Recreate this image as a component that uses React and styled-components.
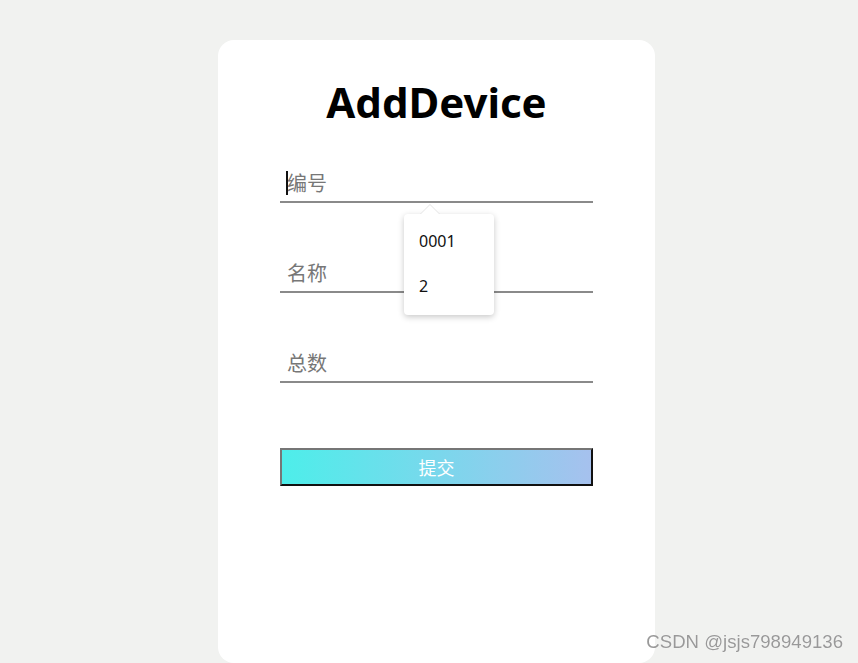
import React from 'react';
import styled, { createGlobalStyle } from 'styled-components';

const GlobalStyle = createGlobalStyle`
  html, body {
    margin: 0;
    padding: 0;
    background: #f1f2f0;
    overflow: hidden;
  }
  body {
    font-family: "Noto Sans", "Noto Sans CJK SC", sans-serif;
  }
`;

const Page = styled.div`
  display: flex;
  justify-content: center;
  height: 663px;
  padding-top: 40px;
  padding-left: 15px;
  box-sizing: border-box;
`;

const Card = styled.div`
  width: 437px;
  height: 623px;
  background: #fff;
  border-radius: 16px;
  padding-top: 32px;
  box-sizing: border-box;
  display: flex;
  flex-direction: column;
  align-items: center;
`;

const Title = styled.h1`
  margin: 0;
  font-size: 42px;
  line-height: 60px;
  font-weight: 700;
  color: #000;
`;

const Form = styled.form`
  width: 313px;
  margin-top: 31px;
  display: flex;
  flex-direction: column;
  gap: 50px;
`;

const Field = styled.div`
  position: relative;
`;

const Input = styled.input`
  display: block;
  width: 100%;
  height: 40px;
  box-sizing: border-box;
  border: none;
  border-bottom: 2px solid #8a8a8a;
  outline: none;
  padding: 2px 7px 0;
  font-family: "Noto Sans", "Noto Sans CJK SC", sans-serif;
  font-size: 20px;
  color: #222;
  background: transparent;
  &::placeholder {
    color: #777;
  }
`;

const Caret = styled.span`
  position: absolute;
  left: 6px;
  top: 8px;
  width: 2px;
  height: 24px;
  background: #111;
`;

const Popup = styled.div`
  position: absolute;
  left: 124px;
  top: 51px;
  width: 90px;
  height: 101px;
  box-sizing: border-box;
  padding-top: 5px;
  background: #fff;
  border-radius: 4px;
  box-shadow: 0 2px 6px rgba(0, 0, 0, 0.22);
  z-index: 2;
  &::before {
    content: '';
    position: absolute;
    left: 16px;
    top: -10px;
    width: 0;
    height: 0;
    border-left: 10px solid transparent;
    border-right: 10px solid transparent;
    border-bottom: 10px solid #e4e4e4;
  }
  &::after {
    content: '';
    position: absolute;
    left: 17px;
    top: -9px;
    width: 0;
    height: 0;
    border-left: 9px solid transparent;
    border-right: 9px solid transparent;
    border-bottom: 9px solid #fff;
  }
`;

const Option = styled.div`
  height: 45px;
  line-height: 45px;
  padding-left: 15px;
  font-size: 16px;
  color: #111;
`;

const Submit = styled.button`
  margin-top: 15px;
  height: 38px;
  width: 100%;
  border: 2px solid;
  border-color: #767676 #111 #111 #767676;
  background: linear-gradient(90deg, #4deeea 0%, #a6c1ee 100%);
  color: #fff;
  font-family: "Noto Sans", "Noto Sans CJK SC", sans-serif;
  font-size: 18px;
  padding: 0;
  cursor: pointer;
`;

const Watermark = styled.div`
  position: fixed;
  right: 15px;
  bottom: 10px;
  font-family: "Liberation Sans", Arial, sans-serif;
  font-size: 18.6px;
  color: #999;
  text-shadow: 0 0 1px #fff;
`;

const App = () => {
  return (
    <>
      <GlobalStyle />
      <Page>
        <Card>
          <Title>AddDevice</Title>
          <Form onSubmit={(e) => e.preventDefault()}>
            <Field>
              <Input placeholder="编号" />
              <Caret />
              <Popup>
                <Option>0001</Option>
                <Option>2</Option>
              </Popup>
            </Field>
            <Field>
              <Input placeholder="名称" />
            </Field>
            <Field>
              <Input placeholder="总数" />
            </Field>
            <Submit type="submit">提交</Submit>
          </Form>
        </Card>
      </Page>
      <Watermark>CSDN @jsjs798949136</Watermark>
    </>
  );
};

export default App;
